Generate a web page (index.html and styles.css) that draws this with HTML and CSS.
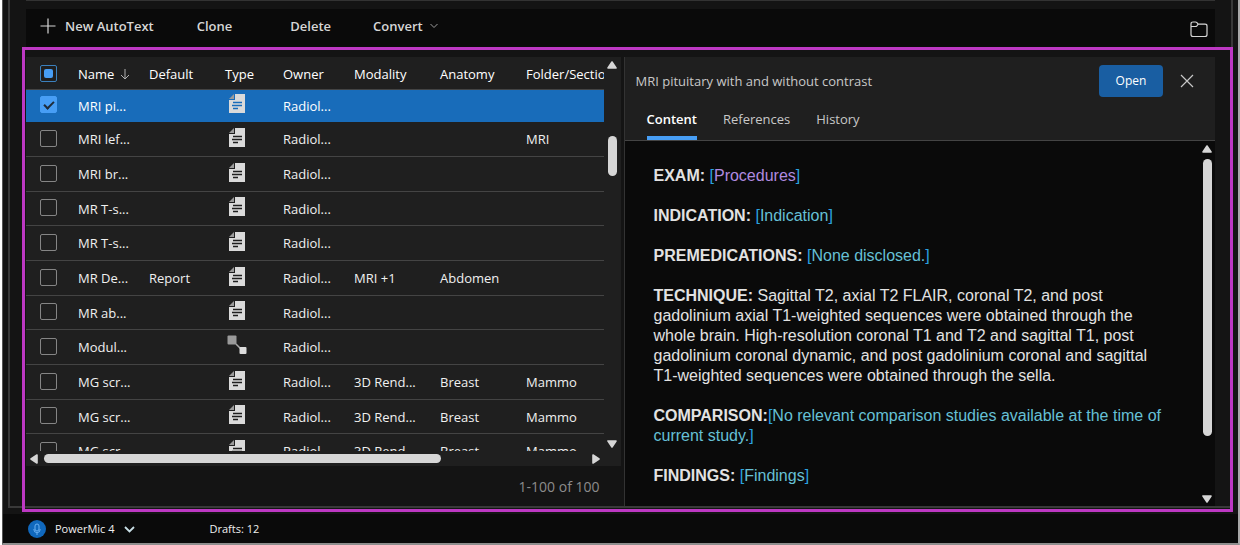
FILE: index.html
```html
<!DOCTYPE html>
<html lang="en">
<head>
<meta charset="utf-8">
<title>AutoText</title>
<link rel="stylesheet" href="styles.css">
</head>
<body>
<svg class="symbols" aria-hidden="true">
  <symbol id="doc" viewBox="0 0 16 19">
    <path d="M6 0H16V19H0V6H6z" fill="#dadada"/>
    <path d="M5 0V5H0z" fill="#9a9a9a"/>
    <path d="M4 8.500H13M3 11.500H13M4 14.500H9" stroke="currentColor" stroke-width="1.300"/>
  </symbol>
  <symbol id="module" viewBox="0 0 20 20">
    <path d="M9 9L14 14" stroke="#a8a8a8" stroke-width="1.500"/>
    <rect x="0.500" y="0.500" width="9" height="9" rx="1" fill="#9a9a9a"/>
    <rect x="12.500" y="12" width="7" height="7" rx="1" fill="#dcdcdc"/>
  </symbol>
  <symbol id="triangle" viewBox="0 0 10 8">
    <path d="M5 1L9 7H1z" fill="#d6d6d6" stroke="#d6d6d6" stroke-width="1.600" stroke-linejoin="round"/>
  </symbol>
</svg>
<div class="app">
  <main class="stage">
    <section class="dialog">
      <div class="toolbar">
        <button class="tool tool-new" type="button"><svg width="16" height="16" viewBox="0 0 16 16" fill="none" stroke="#d6d6d6" stroke-width="1.200"><path d="M8 0.500V15.500M0.500 8H15.500"/></svg>New AutoText</button>
        <button class="tool tool-clone" type="button">Clone</button>
        <button class="tool tool-delete" type="button">Delete</button>
        <button class="tool tool-convert" type="button">Convert<svg width="8" height="6" viewBox="0 0 8 6" fill="none" stroke="#9a9a9a"><path d="M0.500 1L4 4.500L7.500 1"/></svg></button>
        <button class="tool tool-folder" type="button" aria-label="Folders"><svg width="18" height="17" viewBox="0 0 18 17" fill="none" stroke="#d6d6d6" stroke-width="1.200"><path d="M1 5V3Q1 1 3 1H5.500Q6.300 1 6.900 1.700L8.200 3.200H15Q17 3.200 17 5V13.500Q17 15.500 15 15.500H3Q1 15.500 1 13.500zM1 5.500H5.500Q6.300 5.500 6.900 4.800L8.200 3.200"/></svg></button>
      </div>
      <div class="panes">
        <section class="list">
          <div class="grid-area">
            <div class="viewport">
              <table class="grid">
                <colgroup><col class="c-check"><col class="c-name"><col class="c-default"><col class="c-type"><col class="c-owner"><col class="c-modality"><col class="c-anatomy"><col class="c-folder"></colgroup>
                <thead>
                  <tr><th><input type="checkbox" class="box partial" aria-label="Select all"></th><th>Name<svg class="sort" width="10" height="11" viewBox="0 0 10 11" fill="none" stroke="#b0b0b0"><path d="M5 0V10M1 6L5 10L9 6"/></svg></th><th>Default</th><th>Type</th><th>Owner</th><th>Modality</th><th>Anatomy</th><th>Folder/Section</th></tr>
                </thead>
                <tbody>
                  <tr class="selected"><td><input type="checkbox" class="box" checked aria-label="MRI pi..."></td><td>MRI pi...</td><td></td><td><svg class="doc"><use href="#doc"/></svg></td><td>Radiol...</td><td></td><td></td><td></td></tr>
                  <tr><td><input type="checkbox" class="box" aria-label="MRI lef..."></td><td>MRI lef...</td><td></td><td><svg class="doc"><use href="#doc"/></svg></td><td>Radiol...</td><td></td><td></td><td>MRI</td></tr>
                  <tr><td><input type="checkbox" class="box" aria-label="MRI br..."></td><td>MRI br...</td><td></td><td><svg class="doc"><use href="#doc"/></svg></td><td>Radiol...</td><td></td><td></td><td></td></tr>
                  <tr><td><input type="checkbox" class="box" aria-label="MR T-s..."></td><td>MR T-s...</td><td></td><td><svg class="doc"><use href="#doc"/></svg></td><td>Radiol...</td><td></td><td></td><td></td></tr>
                  <tr><td><input type="checkbox" class="box" aria-label="MR T-s..."></td><td>MR T-s...</td><td></td><td><svg class="doc"><use href="#doc"/></svg></td><td>Radiol...</td><td></td><td></td><td></td></tr>
                  <tr><td><input type="checkbox" class="box" aria-label="MR De..."></td><td>MR De...</td><td>Report</td><td><svg class="doc"><use href="#doc"/></svg></td><td>Radiol...</td><td>MRI +1</td><td>Abdomen</td><td></td></tr>
                  <tr><td><input type="checkbox" class="box" aria-label="MR ab..."></td><td>MR ab...</td><td></td><td><svg class="doc"><use href="#doc"/></svg></td><td>Radiol...</td><td></td><td></td><td></td></tr>
                  <tr><td><input type="checkbox" class="box" aria-label="Modul..."></td><td>Modul...</td><td></td><td><svg class="module"><use href="#module"/></svg></td><td>Radiol...</td><td></td><td></td><td></td></tr>
                  <tr><td><input type="checkbox" class="box" aria-label="MG scr..."></td><td>MG scr...</td><td></td><td><svg class="doc"><use href="#doc"/></svg></td><td>Radiol...</td><td>3D Rend...</td><td>Breast</td><td>Mammo</td></tr>
                  <tr><td><input type="checkbox" class="box" aria-label="MG scr..."></td><td>MG scr...</td><td></td><td><svg class="doc"><use href="#doc"/></svg></td><td>Radiol...</td><td>3D Rend...</td><td>Breast</td><td>Mammo</td></tr>
                  <tr><td><input type="checkbox" class="box" aria-label="MG scr..."></td><td>MG scr...</td><td></td><td><svg class="doc"><use href="#doc"/></svg></td><td>Radiol...</td><td>3D Rend...</td><td>Breast</td><td>Mammo</td></tr>
                </tbody>
              </table>
            </div>
            <div class="vbar list-vbar"><svg class="arrow"><use href="#triangle"/></svg><div class="track"><div class="thumb"></div></div><svg class="arrow down"><use href="#triangle"/></svg></div>
            <div class="hbar"><svg class="arrow left"><use href="#triangle"/></svg><div class="track"><div class="thumb"></div></div><svg class="arrow right"><use href="#triangle"/></svg></div>
          </div>
          <div class="pager">1-100 of 100</div>
        </section>
        <section class="preview">
          <header class="preview-head">
            <div class="title-row">
              <h2 class="title">MRI pituitary with and without contrast</h2>
              <button class="open" type="button">Open</button>
              <button class="close" type="button" aria-label="Close"><svg width="14" height="14" viewBox="0 0 14 14" fill="none" stroke="#c8c8c8" stroke-width="1.200"><path d="M1 1L13 13M13 1L1 13"/></svg></button>
            </div>
            <nav class="tabs">
              <button class="tab active" type="button">Content</button>
              <button class="tab" type="button">References</button>
              <button class="tab" type="button">History</button>
            </nav>
          </header>
          <div class="preview-body">
            <article class="report">
              <p><b>EXAM:</b> <span class="bracket">[</span><span class="merge">Procedures</span><span class="bracket">]</span></p>
              <p><b>INDICATION:</b> <span class="bracket">[</span><span class="field">Indication</span><span class="bracket">]</span></p>
              <p><b>PREMEDICATIONS:</b> <span class="bracket">[</span><span class="field">None disclosed.</span><span class="bracket">]</span></p>
              <p><b>TECHNIQUE:</b> Sagittal T2, axial T2 FLAIR, coronal T2, and post gadolinium axial T1-weighted sequences were obtained through the whole brain. High-resolution coronal T1 and T2 and sagittal T1, post gadolinium coronal dynamic, and post gadolinium coronal and sagittal T1-weighted sequences were obtained through the sella.</p>
              <p><b>COMPARISON:</b><span class="bracket">[</span><span class="field">No relevant comparison studies available at the time of current study.</span><span class="bracket">]</span></p>
              <p><b>FINDINGS:</b> <span class="bracket">[</span><span class="field">Findings</span><span class="bracket">]</span></p>
            </article>
            <div class="vbar preview-vbar"><svg class="arrow"><use href="#triangle"/></svg><div class="track"><div class="thumb"></div></div><svg class="arrow down"><use href="#triangle"/></svg></div>
          </div>
        </section>
      </div>
    </section>
    <div class="highlight"></div>
  </main>
  <footer class="status">
    <button class="mic" type="button"><svg width="18" height="18" viewBox="0 0 18 18" fill="none" stroke="#69b0f3"><circle cx="9" cy="9" r="9" fill="#1068bd" stroke="none"/><rect x="7" y="4" width="4" height="7" rx="2"/><path d="M6 9V10Q6 12.500 9 12.500Q12 12.500 12 10V9M9 12.500V15"/></svg><span>PowerMic 4</span><svg width="11" height="7" viewBox="0 0 11 7" fill="none" stroke="#c9dfe6" stroke-width="1.800"><path d="M1 1L5.500 5.500L10 1"/></svg></button>
    <span class="drafts">Drafts: 12</span>
  </footer>
</div>
</body>
</html>
```
FILE: styles.css
```css
* { box-sizing: border-box; }

body {
  margin: 0;
  background: #fff;
  color: #f0f0f0;
  font: 13px/20px "Segoe UI", "Open Sans", "Noto Sans", sans-serif;
}

button {
  margin: 0;
  padding: 0;
  border: 0;
  background: none;
  color: inherit;
  font: inherit;
}

svg { display: block; flex: none; }
.symbols { position: absolute; width: 0; height: 0; }

.app {
  display: flex;
  flex-direction: column;
  height: 100vh;
  margin-left: 2px;
  border-left: 1px solid #555;
  border-right: 2px solid #a8a8a8;
  border-bottom: 2px solid #8e8e8e;
  background: #0a0a0a;
}

.stage {
  position: relative;
  display: flex;
  flex: 1;
  min-height: 0;
  padding: 0 5px 6px;
  background: #141414;
}

.dialog {
  display: flex;
  flex: 1;
  flex-direction: column;
  min-width: 0;
  padding: 0 16px;
  border: 2px solid #393939;
  border-top: 0;
}

.highlight {
  position: absolute;
  inset: 47px 5px 2px 19px;
  border: 3px solid #bd38c3;
  pointer-events: none;
}

.toolbar {
  display: flex;
  align-items: center;
  height: 47px;
  padding: 0 7px 4px 14px;
  border-top: 1px solid #333;
  background: linear-gradient(#141414 8px, #0a0a0a 8px);
  color: #d6d6d6;
  font-weight: 600;
}

.tool { display: flex; align-items: center; padding-top: 8px; }
.tool-new { gap: 9px; margin-right: 43px; }
.tool-clone { margin-right: 58px; }
.tool-delete { margin-right: 42px; }
.tool-convert { gap: 7px; }
.tool-folder { margin-left: auto; padding-top: 15px; }

.panes {
  display: flex;
  flex: 1;
  gap: 3px;
  min-height: 0;
  margin-top: 10px;
}

.list {
  display: flex;
  flex: 0 0 50%;
  flex-direction: column;
  min-width: 0;
}

.grid-area {
  display: grid;
  flex: 1;
  grid-template-columns: minmax(0, 1fr) 17px;
  grid-template-rows: minmax(0, 1fr) 15px;
  min-height: 0;
  background: #1f1f1f;
}

.viewport { overflow: hidden; }

.grid {
  width: 600px;
  border-spacing: 0;
  table-layout: fixed;
}

.c-check { width: 52px; }
.c-name { width: 71px; }
.c-default { width: 76px; }
.c-type { width: 58px; }
.c-owner { width: 71px; }
.c-modality { width: 86px; }
.c-anatomy { width: 86px; }
.c-folder { width: 100px; }

.grid th, .grid td {
  height: 35px;
  padding: 0;
  border-bottom: 1px solid #444;
  font-weight: 400;
  text-align: left;
  white-space: nowrap;
}
.grid th { height: 33px; padding-top: 2px; color: #fff; }
.grid tbody tr:nth-child(3n+4) td { height: 34px; }
.grid .selected td {
  height: 32px;
  border-bottom-color: #186cba;
  background: #186cba;
}
.grid .selected { color: #fff; }

.sort { display: inline-block; margin-left: 6px; vertical-align: -1px; }
.doc { width: 16px; height: 19px; margin: 0 0 4px 4px; color: #1f1f1f; }
.selected .doc { color: #186cba; }
.module { width: 20px; height: 20px; margin: 0 0 4px 2px; }

.box {
  display: grid;
  place-items: center;
  width: 17px;
  height: 17px;
  margin: 0 0 2px 14px;
  border: 1px solid #858585;
  border-radius: 2px;
  appearance: none;
}
.box.partial { border-color: #3b80bd; }
.box.partial::before {
  width: 9px;
  height: 9px;
  border-radius: 2px;
  background: #479ef5;
  content: "";
}
.box:checked { border-color: #479ef5; background: #479ef5; }
.box:checked::before {
  width: 8px;
  height: 4px;
  margin-bottom: 2px;
  border: solid #1f2c3a;
  border-width: 0 0 2px 2px;
  transform: rotate(-45deg);
  content: "";
}

.vbar, .hbar { display: flex; align-items: center; }
.vbar { flex-direction: column; }
.track { position: relative; flex: 1; align-self: stretch; }
.thumb {
  position: absolute;
  border-radius: 5px;
  background: #d6d6d6;
}
.arrow { width: 10px; height: 8px; }
.down { transform: rotate(180deg); }
.left { transform: rotate(-90deg); }
.right { transform: rotate(90deg); }

.list-vbar { padding: 4px 1px 3px 0; }
.list-vbar .thumb { top: 18%; left: 4px; width: 9px; height: 40px; }
.hbar { gap: 4px; padding: 0 3px; }
.hbar .thumb { top: 3px; left: 1px; width: 73%; height: 9px; }

.pager {
  height: 40px;
  padding: 11px 21px 0 0;
  color: #8c8c8c;
  font-size: 14px;
  text-align: right;
}

.preview {
  display: flex;
  flex: 1;
  flex-direction: column;
  min-width: 0;
  border-left: 1px solid #333;
  background: #0a0a0a;
}

.preview-head {
  border-bottom: 1px solid #444;
  background: #1f1f1f;
}

.title-row {
  display: flex;
  align-items: center;
  height: 48px;
  padding: 0 21px 0 11px;
}

.title {
  flex: 1;
  margin: 0;
  color: #c8c8c8;
  font-size: 13px;
  font-weight: 400;
}

.open {
  width: 64px;
  height: 32px;
  border-radius: 4px;
  background: #195ea2;
  color: #fff;
  font-size: 12px;
}

.close { margin-left: 17px; }

.tabs {
  display: flex;
  gap: 26px;
  height: 35px;
  padding-left: 22px;
}

.tab {
  padding-bottom: 4px;
  border-bottom: 4px solid transparent;
  color: #c8c8c8;
}

.tab.active {
  border-image: linear-gradient(#479ef5, #479ef5) 4;
  color: #fff;
  font-weight: 600;
}

.preview-body { display: flex; flex: 1; min-height: 0; }

.report {
  flex: 1;
  overflow: hidden;
  padding: 25px 34px 0 29px;
  color: #e2e2e2;
  font: 16px/20px "Liberation Sans", Arial, sans-serif;
}
.report p { margin: 0 0 20px; }
.field { color: #66c0d6; }
.bracket { color: #2ba3e0; }
.merge { color: #b08ae0; }

.preview-vbar { width: 16px; padding: 4px 0 3px; }
.preview-vbar .thumb { top: 6px; left: 4px; width: 9px; height: 81%; }

.status {
  display: flex;
  align-items: center;
  gap: 75px;
  height: 29px;
  padding-left: 25px;
  font-size: 11px;
}
.mic { display: flex; align-items: center; gap: 9px; }
.mic svg:last-child { margin-top: 2px; }
```
